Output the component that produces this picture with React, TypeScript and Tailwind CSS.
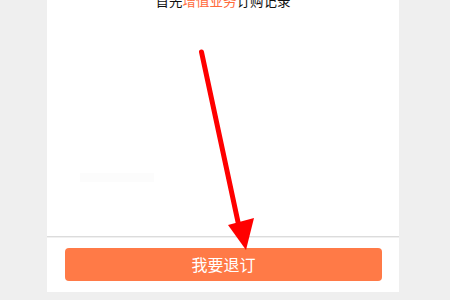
import React from "react";

export default function App() {
  return (
    <div
      className="relative w-[450px] h-[300px] overflow-hidden bg-[#efefef]"
      style={{ fontFamily: '"Noto Sans CJK SC", "Noto Sans", sans-serif' }}
    >
      <div className="ml-[47px] w-[352px] h-[292px] bg-white flex flex-col">
        <div className="h-[236px] flex flex-col items-center">
          <div className="mt-[-7px] text-[13.5px] leading-[14px] text-[#111] whitespace-nowrap">
            首先<span className="text-[#ff6a3a]">增值业务</span>订购记录
          </div>
          <div className="mt-[166px] self-start ml-[33px] w-[74px] h-[9px] bg-[#fcfcfc]" />
        </div>
        <div className="h-px bg-[#dcdcdc]" />
        <div className="h-px bg-[#f0f0f0]" />
        <div className="pt-[10px] px-[18px]">
          <button className="w-[317px] h-[33px] rounded-[4px] bg-[#ff7a47] text-white text-[16px] leading-[33px] flex items-center justify-center">
            我要退订
          </button>
        </div>
      </div>
      <svg
        className="absolute left-0 top-0 pointer-events-none"
        width="450"
        height="300"
        viewBox="0 0 450 300"
      >
        <line
          x1="201.5"
          y1="52"
          x2="238"
          y2="222"
          stroke="#ff0000"
          strokeWidth="5"
          strokeLinecap="round"
        />
        <polygon points="228,225 254,218 246,250" fill="#ff0000" />
      </svg>
    </div>
  );
}
